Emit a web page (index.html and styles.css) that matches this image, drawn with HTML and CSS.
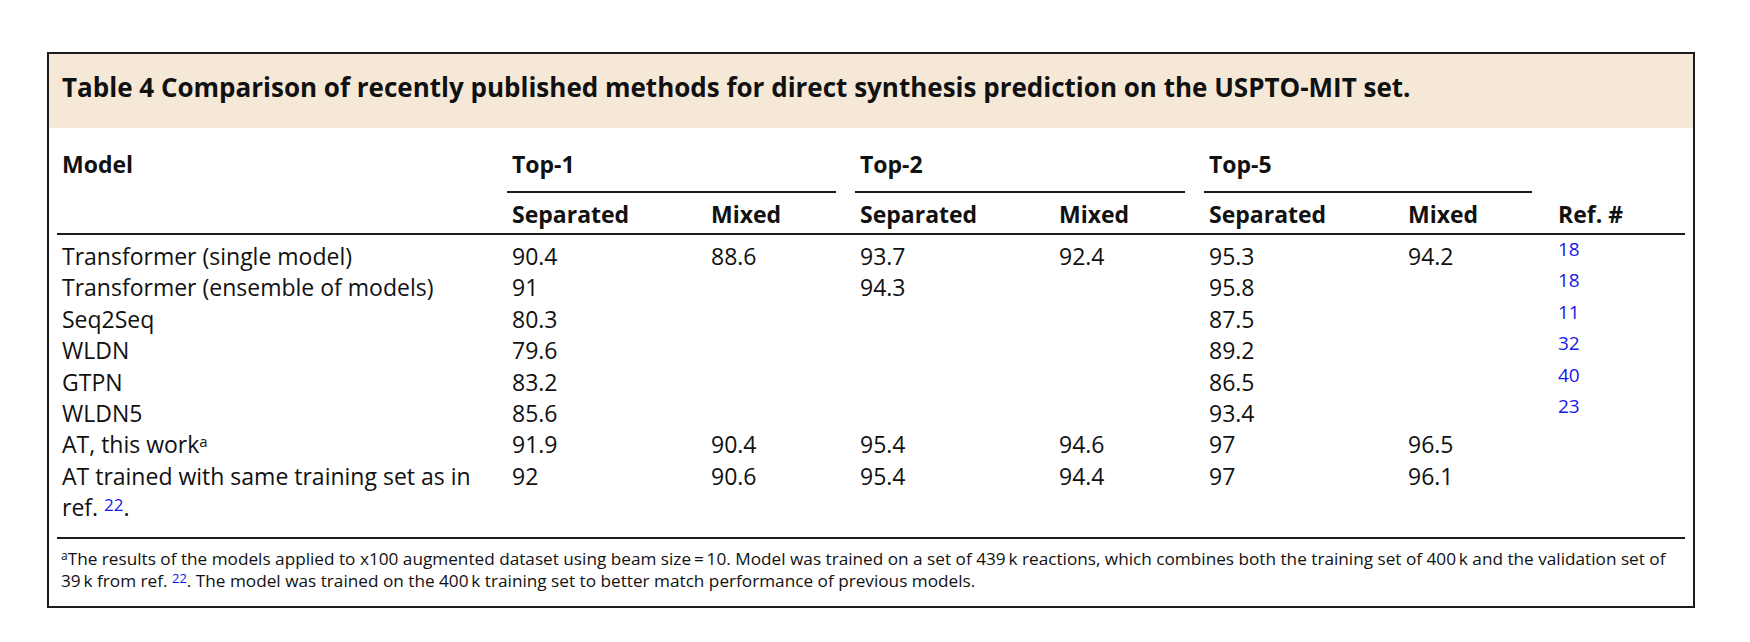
FILE: index.html
```html
<!DOCTYPE html>
<html lang="en">
<head>
<meta charset="utf-8">
<title>Table 4</title>
<link rel="stylesheet" href="styles.css">
</head>
<body>
<div class="card">
  <div class="caption">Table 4 Comparison of recently published methods for direct synthesis prediction on the USPTO-MIT set.</div>
  <div class="tbl">
    <div class="thead">
      <div class="th model-h">Model</div>
      <div class="th grp g1">Top-1</div>
      <div class="th grp g2">Top-2</div>
      <div class="th grp g3">Top-5</div>
      <div class="th sub">Separated</div>
      <div class="th sub">Mixed</div>
      <div class="th sub">Separated</div>
      <div class="th sub">Mixed</div>
      <div class="th sub">Separated</div>
      <div class="th sub">Mixed</div>
      <div class="th sub">Ref. #</div>
    </div>
    <div class="tbody">
      <div class="td">Transformer (single model)</div><div class="td">90.4</div><div class="td">88.6</div><div class="td">93.7</div><div class="td">92.4</div><div class="td">95.3</div><div class="td">94.2</div><div class="td ref">18</div>
      <div class="td">Transformer (ensemble of models)</div><div class="td">91</div><div class="td"></div><div class="td">94.3</div><div class="td"></div><div class="td">95.8</div><div class="td"></div><div class="td ref">18</div>
      <div class="td">Seq2Seq</div><div class="td">80.3</div><div class="td"></div><div class="td"></div><div class="td"></div><div class="td">87.5</div><div class="td"></div><div class="td ref">11</div>
      <div class="td">WLDN</div><div class="td">79.6</div><div class="td"></div><div class="td"></div><div class="td"></div><div class="td">89.2</div><div class="td"></div><div class="td ref">32</div>
      <div class="td">GTPN</div><div class="td">83.2</div><div class="td"></div><div class="td"></div><div class="td"></div><div class="td">86.5</div><div class="td"></div><div class="td ref">40</div>
      <div class="td">WLDN5</div><div class="td">85.6</div><div class="td"></div><div class="td"></div><div class="td"></div><div class="td">93.4</div><div class="td"></div><div class="td ref">23</div>
      <div class="td">AT, this work<sup class="fn">a</sup></div><div class="td">91.9</div><div class="td">90.4</div><div class="td">95.4</div><div class="td">94.6</div><div class="td">97</div><div class="td">96.5</div><div class="td ref"></div>
      <div class="td"><span class="line">AT trained with same training set as in</span> <span class="line">ref. <sup class="cite">22</sup>.</span></div><div class="td">92</div><div class="td">90.6</div><div class="td">95.4</div><div class="td">94.4</div><div class="td">97</div><div class="td">96.1</div><div class="td ref"></div>
    </div>
  </div>
  <div class="foot">
    <p><sup class="fn-s">a</sup>The results of the models applied to x100 augmented dataset using beam size&#8201;=&#8201;10. Model was trained on a set of 439&#8201;k reactions, which combines both the training set of 400&#8201;k and the validation set of<br>39&#8201;k from ref. <sup class="cite-s">22</sup>. The model was trained on the 400&#8201;k training set to better match performance of previous models.</p>
  </div>
</div>
</body>
</html>
```
FILE: styles.css
```css
html, body {
  margin: 0;
  padding: 0;
  background: #ffffff;
}

body {
  padding: 52px 0 0 47px;
  font-family: "Open Sans", "Noto Sans", sans-serif;
  color: #111111;
}

.card {
  width: 1644px;
  border: 2px solid #1c1c1c;
  background: #ffffff;
}

.caption {
  background: #f5e8d7;
  height: 74px;
  box-sizing: border-box;
  padding: 18px 0 0 13px;
  font-size: 26px;
  line-height: 30px;
  font-weight: 700;
  white-space: nowrap;
}

.tbl {
  padding: 0 8px;
}

.thead,
.tbody {
  display: grid;
  grid-template-columns: 450px 199px 149px 199px 150px 199px 150px 1fr;
}

.thead {
  border-bottom: 2px solid #1c1c1c;
  font-weight: 700;
  font-size: 23px;
  line-height: 28px;
}

.th {
  padding-left: 5px;
}

.model-h {
  grid-row: 1 / span 2;
  padding-top: 22px;
}

.grp {
  grid-column: span 2;
  padding-top: 22px;
  padding-bottom: 13px;
  border-bottom: 2px solid #1c1c1c;
  margin-right: 19px;
}

.g3 {
  margin-right: 21px;
}

.sub {
  grid-row: 2;
  padding-top: 7px;
  padding-bottom: 5px;
}

.model-h + .grp + .grp + .grp + .sub { grid-column: 2; }

.tbody {
  padding: 6px 0 13px;
  font-size: 23px;
  line-height: 31.4px;
}

.td {
  padding-left: 5px;
  padding-right: 8px;
}

.line {
  white-space: nowrap;
}

.ref {
  color: #1717e8;
  font-size: 19px;
  line-height: 16px;
}

.fn {
  font-size: 15px;
  line-height: 0;
  vertical-align: 6px;
}

.cite {
  color: #1717e8;
  font-size: 17px;
  line-height: 0;
  vertical-align: 5px;
}

.foot {
  margin: 0 8px;
  border-top: 2px solid #1c1c1c;
  padding: 9px 0 14px 4px;
}

.foot p {
  margin: 0;
  font-size: 17.2px;
  line-height: 22px;
  white-space: nowrap;
}

.fn-s {
  font-size: 12px;
  line-height: 0;
  vertical-align: 5px;
}

.cite-s {
  color: #1717e8;
  font-size: 13px;
  line-height: 0;
  vertical-align: 4px;
}
```
